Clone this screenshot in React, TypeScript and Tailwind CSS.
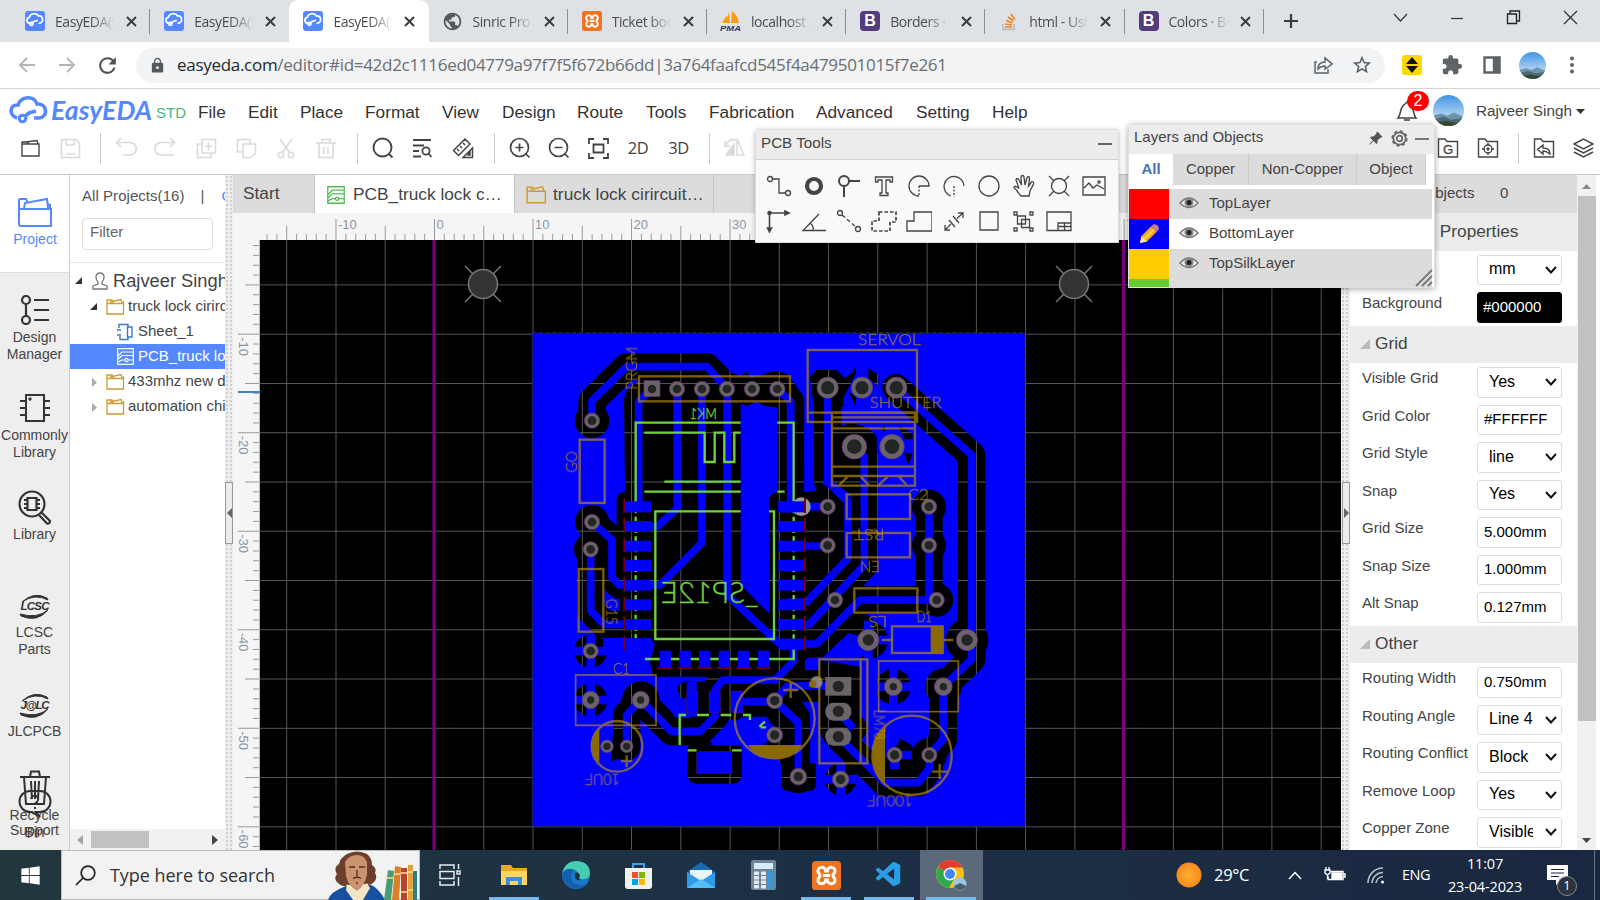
import React from "react";
import { MdPublic, MdExtension, MdLock, MdRefresh, MdStarBorder } from "react-icons/md";
import { FaWindows } from "react-icons/fa";
import { VscVscode } from "react-icons/vsc";
import { BsPinAngleFill } from "react-icons/bs";

type P = { children?: React.ReactNode };

function Svg({ w = 24, h = w, vb, sw = 1.5, c = "#444", cls = "", children }: P & { w?: number; h?: number; vb?: string; sw?: number; c?: string; cls?: string }) {
  return (
    <svg width={w} height={h} viewBox={vb ?? `0 0 ${w} ${h}`} fill="none" stroke={c} strokeWidth={sw} className={"shrink-0 " + cls}>
      {children}
    </svg>
  );
}

const CAR = "M7 17 C2 17 1 10 6 9 C7 3 16 2 19 7 C25 6 27 15 21 17 L19 17 M9 18 L12 15 L18 13";
function EasyFav() {
  return (
    <Svg w={20} vb="0 0 28 28" sw={2.4} c="#fff" cls="rounded-[3px] bg-[#5588ff]">
      <path d={CAR} />
      <circle cx="9" cy="18" r="2.2" />
    </Svg>
  );
}
function Avatar({ s }: { s: number }) {
  return (
    <svg width={s} height={s} viewBox="0 0 30 30" className="shrink-0 rounded-full">
      <defs>
        <linearGradient id="sky" x1="0" y1="0" x2="0" y2="1">
          <stop offset="0" stopColor="#3f93e6" />
          <stop offset=".6" stopColor="#a5cdef" />
        </linearGradient>
      </defs>
      <rect width="30" height="30" fill="url(#sky)" />
      <path d="M0 20 L8 18 L14 20 L20 17 L30 21 V30 H0Z" fill="#6f93ac" />
      <path d="M0 24 L10 21 L18 24 L30 22 V30 H0Z" fill="#4d6a74" />
      <path d="M0 27 L12 25 L22 27 L30 25 V30 H0Z" fill="#33492f" />
    </svg>
  );
}
function Pma() {
  return (
    <svg width="22" height="20" viewBox="0 0 22 20">
      <path d="M9 1 L10 12 L3 12 Q8 8 9 1Z M12 0 Q18 5 19 12 L11 12Z M7 4 L7 12 L2 12Z" fill="#f89c0e" />
      <text x="0" y="19.5" fontFamily="Liberation Sans" fontSize="8" fontWeight="bold" fontStyle="italic" fill="#333a6b" textLength="21" lengthAdjust="spacingAndGlyphs">PMA</text>
    </svg>
  );
}
function XBox({ s }: { s: number }) {
  return (
    <svg width={s} height={s} viewBox="0 0 32 32">
      <rect width="32" height="32" rx="4" fill="#f0731f" />
      <path d="M10 7 a4 4 0 0 1 5 4 h2 a4 4 0 0 1 5 -4 a4 4 0 0 1 2 7 a3 3 0 0 0 0 4 a4 4 0 0 1 -2 7 a4 4 0 0 1 -5 -4 h-2 a4 4 0 0 1 -5 4 a4 4 0 0 1 -2 -7 a3 3 0 0 0 0 -4 a4 4 0 0 1 2 -7Z M12 16 h8" fill="none" stroke="#fff" strokeWidth="3.2" />
    </svg>
  );
}
const Boot = () => (
  <span className="flex size-[20px] items-center justify-center rounded-[4px] bg-[#533b7c] font-['Liberation_Sans',sans-serif] text-[16px] font-bold text-white">B</span>
);
const So = () => (
  <svg width="18" height="20" viewBox="0 0 18 20" fill="none">
    <path d="M3 13 V18.5 H14 V13" stroke="#bcbbbb" strokeWidth="1.6" />
    <path d="M5 16 H12 M5 13 L12 14 M6 9.5 L12.5 12 M8 6 L13.5 10 M11 3 L15 8.5" stroke="#f48024" strokeWidth="1.6" />
  </svg>
);

function Tab({ icon, text, active, noSep }: { icon: React.ReactNode; text: string; active?: boolean; noSep?: boolean }) {
  return (
    <div className={"relative flex h-[42px] w-[139.2px] shrink-0 items-center pl-[13px] " + (active ? "rounded-t-[9px] bg-white" : "")}>
      <span className="flex w-[22px] justify-center">{icon}</span>
      <span className={"ml-[9px] w-[60px] overflow-hidden whitespace-nowrap bg-clip-text font-['Open_Sans',sans-serif] text-[14px] tracking-[-0.45px] text-transparent bg-linear-to-r from-[#45494d] from-60% to-100% " + (active ? "to-white" : "to-[#dee1e6]")}>{text}</span>
      <Svg w={11} sw={2} c="#3a3d40" cls="ml-[11px]">
        <path d="M1 1 L10 10 M10 1 L1 10" />
      </Svg>
      {!noSep && !active && <span className="ml-auto h-[25px] w-px bg-[#8b8e92]" />}
    </div>
  );
}

function Chrome() {
  return (
    <>
      <div className="flex h-[42px] bg-[#dee1e6] pl-[11px]">
        <Tab icon={<EasyFav />} text="EasyEDA(St" />
        <Tab icon={<EasyFav />} text="EasyEDA(St" noSep />
        <Tab icon={<EasyFav />} text="EasyEDA(St" active />
        <Tab icon={<MdPublic size={21} color="#55585c" />} text="Sinric Pro" />
        <Tab icon={<XBox s={20} />} text="Ticket boo" />
        <Tab icon={<Pma />} text="localhost /" />
        <Tab icon={<Boot />} text="Borders · B" />
        <Tab icon={<So />} text="html - Usi" />
        <Tab icon={<Boot />} text="Colors · Bo" />
        <div className="flex flex-1 items-center">
          <Svg w={16} sw={2.2} c="#3a3d40" cls="ml-[19px]"><path d="M8 1 V15 M1 8 H15" /></Svg>
          <div className="ml-auto flex items-center gap-[42px] pb-[7px] pr-[22px]">
            <Svg w={15} sw={1.2} c="#333"><path d="M1 4 L7.500 11 L14 4" /></Svg>
            <Svg w={14} sw={1.2} c="#333"><path d="M1 7.500 H13" /></Svg>
            <Svg w={15} sw={1.3} c="#222"><path d="M1.500 4 H10.500 V13.500 H1.500Z M4 4 V1 H13.500 V11 H10.500" /></Svg>
            <Svg w={15} sw={1.3} c="#333"><path d="M1 1 L14 14 M14 1 L1 14" /></Svg>
          </div>
        </div>
      </div>
      <div className="flex h-[47px] items-center border-b border-[#d0d3d7] bg-white pl-[18px]">
        <Svg w={18} sw={1.8} c="#b4b6b9"><path d="M17 9 H2 M9 2 L2 9 L9 16" /></Svg>
        <Svg w={18} sw={1.8} c="#b4b6b9" cls="ml-[22px]"><path d="M1 9 H16 M9 2 L16 9 L9 16" /></Svg>
        <MdRefresh size={25} color="#4e5256" className="ml-[19px] shrink-0" />
        <div className="ml-[16px] flex h-[35px] w-[1249px] shrink-0 items-center rounded-full bg-[#f1f3f4] pl-[13px] font-['Open_Sans',sans-serif] text-[17px] text-[#6a6e72]">
          <MdLock size={17} color="#55595d" className="shrink-0" />
          <span className="ml-[11px] whitespace-nowrap tracking-[-0.295px]"><span className="text-[#26282b]">easyeda.com</span>/editor#id=42d2c1116ed04779a97f7f5f672b66dd|3a764faafcd545f4a479501015f7e261</span>
          <Svg w={20} sw={1.5} c="#5f6368" cls="ml-auto"><path d="M4 7 H2 V18 H15 V14 M5 14 C5 9 8 7 12 7 V3 L19 9 L12 14 V11 C9 11 7 12 5 14Z" /></Svg>
          <MdStarBorder size={22} color="#55595d" className="ml-[18px] mr-[12px]" />
        </div>
        <Svg w={20} sw={0} cls="ml-[17px] rounded-[3px] bg-[#fbd900]"><path d="M10 2 L16 9 H4Z M10 18 L16 11 H4Z" fill="#111" /></Svg>
        <MdExtension size={22} color="#5f6368" className="ml-[19px]" />
        <Svg w={18} sw={2.4} c="#5f6368" cls="ml-[20px]"><path d="M1.500 1.500 H16.500 V16.500 H1.500Z" /><path d="M11 2 H16 V16 H11Z" fill="#5f6368" /></Svg>
        <span className="ml-[18px]"><Avatar s={27} /></span>
        <Svg w={4} h={18} sw={0} cls="ml-[24px]"><g fill="#5f6368"><circle cx="2" cy="2.500" r="2" /><circle cx="2" cy="9" r="2" /><circle cx="2" cy="15.500" r="2" /></g></Svg>
      </div>
    </>
  );
}

const Cell = ({ w, children }: P & { w: string }) => <div className={"flex h-[32px] shrink-0 items-center justify-center " + w}>{children}</div>;
const Sep = () => <div className="h-[31px] w-px shrink-0 bg-[#c9c9c9]" />;
const Lite = "#dadada";
const FolderSh = ({ children }: P) => (
  <Svg w={22} sw={1.4}><path d="M1.500 2 H8 L10 4.500 H20.500 V20 H1.500Z" />{children}</Svg>
);

function Header() {
  const menu: [string, string][] = [["File", "w-[50px]"], ["Edit", "w-[52px]"], ["Place", "w-[65px]"], ["Format", "w-[77px]"], ["View", "w-[60px]"], ["Design", "w-[75px]"], ["Route", "w-[69px]"], ["Tools", "w-[63px]"], ["Fabrication", "w-[107px]"], ["Advanced", "w-[100px]"], ["Setting", "w-[76px]"], ["Help", "w-[60px]"]];
  return (
    <div className="h-[86px] shrink-0 border-b border-[#c8c8c8] bg-white">
      <div className="flex h-[42px] items-center">
        <svg width="144" height="34" viewBox="0 0 144 34" className="ml-[9px] mt-[2px] shrink-0">
          <g fill="none" stroke="#5588ff" strokeWidth="3.600">
            <path d="M8 24 C-1 21 1 10 9 11 C12 2 25 1 28 10 C38 9 40 23 30 24 H25 M15 23 L20 19 L27 17" />
            <circle cx="13.500" cy="24.500" r="3.300" strokeWidth="3" />
          </g>
          <text x="42" y="26" fontFamily="Lato" fontWeight="700" fontStyle="italic" fontSize="27" fill="#5588ff" textLength="101" lengthAdjust="spacingAndGlyphs">EasyEDA</text>
        </svg>
        <span className="ml-[3px] w-[42px] pt-[7px] text-[15px] text-[#45b97c]">STD</span>
        {menu.map(([m, w]) => (
          <span key={m} className={"shrink-0 pt-[5px] text-[17.250px] text-[#333] " + w}>{m}</span>
        ))}
        <div className="ml-auto flex items-center gap-[11px] pr-[15px] pt-[1px]">
          <div className="relative">
            <Svg w={22} h={24} sw={1.5}><path d="M2 19 C5 16 4 8 8 6 L11 3 L14 6 C18 8 17 16 20 19Z M8 21 H14" /></Svg>
            <span className="absolute -right-[11px] -top-[8px] flex h-[20px] w-[22px] items-center justify-center rounded-full bg-[#f00] text-[16px] text-white">2</span>
          </div>
          <div className="flex items-center gap-[12px]">
            <span className="ml-[4px]"><Avatar s={31} /></span>
            <span className="whitespace-nowrap pt-[2px] text-[15.300px] text-[#444]">Rajveer Singh</span>
            <Svg w={9} h={6} sw={0} cls="-ml-[8px] mt-[2px]"><path d="M0 0 H9 L4.500 5Z" fill="#333" /></Svg>
          </div>
        </div>
      </div>
      <div className="flex h-[34px] items-center pl-[10px]">
        <Cell w="w-[40px]"><Svg w={19} sw={1.4}><path d="M1 5 H18 V17 H1Z M1 5 V3 H6 L8 5 M4 3 L16 1.500 L17 5" /></Svg></Cell>
        <Cell w="w-[40px]"><Svg w={21} sw={1.6} c={Lite}><path d="M1.500 1.500 H16 L19.500 5 V19.500 H1.500Z M6 1.500 V7 H14 V1.500 M6 16 H15" /></Svg></Cell>
        <div className="ml-[10px]"><Sep /></div>
        <Cell w="w-[50px]"><Svg w={22} sw={1.6} c={Lite}><path d="M6 1 L1.500 5.500 L6 10 M1.500 5.500 H15 A6 6 0 0 1 15 18 H8" /></Svg></Cell>
        <Cell w="w-[28px]"><Svg w={22} sw={1.6} c={Lite}><path d="M16 1 L20.500 5.500 L16 10 M20.500 5.500 H7 A6 6 0 0 0 7 18 H20" /></Svg></Cell>
        <Cell w="w-[54px]"><Svg w={21} sw={1.6} c={Lite}><path d="M6 1.500 H19.500 V15 H6Z M6 6 H1.500 V19.500 H15 V15 M12.500 4.500 V12 M9 8.300 H16.500" /></Svg></Cell>
        <Cell w="w-[26px]"><Svg w={21} sw={1.6} c={Lite}><path d="M14 6 V1.500 H1.500 V14 H7 M7 6 H19.500 V15 L15 19.500 H7Z" /></Svg></Cell>
        <Cell w="w-[54px]"><Svg w={18} h={21} sw={1.6} c={Lite}><path d="M3 1 L13 15 M15 1 L5 15" /><circle cx="4" cy="17" r="2.700" /><circle cx="14" cy="17" r="2.700" /></Svg></Cell>
        <Cell w="w-[26px]"><Svg w={20} h={21} sw={1.6} c={Lite}><path d="M0 5 H20 M6 5 V1.500 H14 V5 M3 5 V19.500 H17 V5 M8 9 V16 M12 9 V16" /></Svg></Cell>
        <div className="ml-[18px]"><Sep /></div>
        <Cell w="w-[49px]"><Svg w={22} sw={1.9}><circle cx="10.500" cy="10.500" r="9" /><path d="M17 17 L20.500 20.500" /></Svg></Cell>
        <Cell w="w-[30px]"><Svg w={20} h={20} sw={1.8}><path d="M1 2 H19 M1 7.500 H12 M1 13 H7 M1 18.500 H9" /><circle cx="14" cy="13" r="3.600" /><path d="M16.500 15.500 L19.500 19" /></Svg></Cell>
        <Cell w="w-[52px]"><Svg w={23} sw={1.5}><path d="M1.500 13.500 L13 2 L18 7 L6.500 18.500Z M5 12 L7 14 M8 9 L10 11 M11 6 L13 8 M11 20.500 L20.500 11 V20.500Z M16 18 L18 15.500 V18Z" /></Svg></Cell>
        <div className="ml-[5px]"><Sep /></div>
        <Cell w="w-[49px]"><Svg w={22} sw={1.7}><circle cx="10.500" cy="10.500" r="9" /><path d="M17 17 L20.500 20.500 M10.500 6.500 V14.500 M6.500 10.500 H14.500" /></Svg></Cell>
        <Cell w="w-[29px]"><Svg w={22} sw={1.7}><circle cx="10.500" cy="10.500" r="9" /><path d="M17 17 L20.500 20.500 M6.500 10.500 H14.500" /></Svg></Cell>
        <Cell w="w-[50px]"><Svg w={21} sw={1.8}><path d="M1 6 V1 H6 M15 1 H20 V6 M20 15 V20 H15 M6 20 H1 V15" /><path d="M5.500 6.500 H15.500 V14.500 H5.500Z" /></Svg></Cell>
        <Cell w="w-[30px]"><span className="font-['Open_Sans',sans-serif] text-[16.500px] tracking-[-0.500px] text-[#444]">2D</span></Cell>
        <Cell w="w-[51px]"><span className="font-['Open_Sans',sans-serif] text-[16.500px] tracking-[-0.500px] text-[#444]">3D</span></Cell>
        <div className="ml-[5px]"><Sep /></div>
        <Cell w="w-[50px]"><Svg w={22} sw={1.5} c={Lite}><path d="M10 18 H2 L10 7Z" fill={Lite} /><path d="M13 2 V18 H20Z M2 8 C4 3 8 2 12 3 M1 4 V9 H6" /></Svg></Cell>
        <div className="ml-auto flex items-center pr-[6px]">
          <FolderSh><text x="11" y="17" textAnchor="middle" fontFamily="Liberation Sans" fontSize="13" fill="#444" stroke="#444" strokeWidth=".3">G</text></FolderSh>
          <div className="ml-[18px]"><FolderSh><circle cx="11" cy="12" r="4" /><circle cx="11" cy="12" r="1" /><path d="M11 6 V9 M11 15 V18 M5 12 H8 M14 12 H17" /></FolderSh></div>
          <div className="ml-[19px]"><Sep /></div>
          <div className="ml-[14px]"><FolderSh><path d="M10 8 L4.500 12.500 L10 17 V14 C14 14 15 16 17 17 C17 12 14 11 10 11Z" /></FolderSh></div>
          <Svg w={21} sw={1.5} cls="ml-[18px]"><path d="M1 6 L10.500 1 L20 6 L10.500 11Z M1 10 L10.500 15 L20 10 M1 14 L10.500 19 L20 14" /></Svg>
        </div>
      </div>
    </div>
  );
}

function RailItem({ icon, lines, cls = "" }: { icon: React.ReactNode; lines: string[]; cls?: string }) {
  return (
    <div className={"flex h-[98px] w-[69px] shrink-0 flex-col items-center " + cls}>
      <div className="flex h-[36px] items-center">{icon}</div>
      <div className="mt-[1px] text-center text-[14px] leading-[17px]">{lines.map((l) => <div key={l}>{l}</div>)}</div>
    </div>
  );
}
function Oval({ t }: { t: string }) {
  return (
    <svg width="36" height="26" viewBox="0 0 36 26" className="translate-y-[2px]">
      <path d="M5 8 Q17 -3 30 4 L31 6 Q18 -1 5 8Z M31 16 Q20 29 4 22 L3 20 Q20 25 31 16Z" fill="#333" stroke="#333" />
      <text x="18" y="16" textAnchor="middle" fontFamily="Liberation Sans" fontWeight="bold" fontStyle="italic" fontSize="11.5" fill="#333" textLength="29">{t}</text>
    </svg>
  );
}
function Rail() {
  const c = "#333";
  return (
    <div className="relative flex w-[70px] shrink-0 flex-col overflow-hidden border-r border-[#ccc] bg-[#eee] text-[#444]">
      <RailItem cls="bg-white pt-[19px] text-[#5588ff] !w-[70px] border-b border-[#ddd]" lines={["Project"]} icon={<Svg w={36} h={32} sw={2} c="#5588ff"><path d="M2 13 H34 V30 H4 Q2 30 2 28Z M2 13 V4 Q2 3 3 3 H9 L11 7 M7 12 L8 7 L30 3 L31 12 M31 8 L33 9 V13" /></Svg>} />
      <RailItem cls="pt-[19px]" lines={["Design", "Manager"]} icon={<Svg w={30} h={30} sw={2.200} c={c}><circle cx="6" cy="5" r="4" /><circle cx="6" cy="25" r="4" /><path d="M6 9 V21 M14 5 H29 M14 15 H29 M14 25 H29" /></Svg>} />
      <RailItem cls="pt-[19px]" lines={["Commonly", "Library"]} icon={<Svg w={32} h={30} sw={2} c={c}><path d="M7 2 H25 V28 H7Z M1 8 H7 M1 15 H7 M1 22 H7 M25 8 H31 M25 15 H31 M25 22 H31" /><circle cx="11" cy="6" r=".7" /></Svg>} />
      <RailItem cls="pt-[20px]" lines={["Library"]} icon={<Svg w={34} h={35} sw={2.200} c={c}><circle cx="14" cy="14" r="12.500" /><path d="M9.500 8 H18.500 V20 H9.500Z M6 10 H9 M6 14 H9 M6 18 H9 M19 10 H22 M19 14 H22 M19 18 H22" /><path d="M23 22 L32 31 Q32 34 29 33.500 L21 25" /></Svg>} />
      <RailItem cls="pt-[20px]" lines={["LCSC", "Parts"]} icon={<Oval t="LCSC" />} />
      <RailItem cls="pt-[21px]" lines={["JLCPCB"]} icon={<Oval t="J@LC" />} />
      <RailItem cls="pt-[7px]" lines={["Recycle", "Bin"]} icon={<Svg w={32} h={36} sw={2} c={c}><path d="M1 7 H31 M11 7 L12 1.500 H20 L21 7 M5 7 L7 34 H25 L27 7 M12 11 L13 29 M16 11 V29 M20 11 L19 29" /></Svg>} />
      <div className="absolute left-0 top-[615px] w-[69px] text-center text-[14px] leading-[17px]">
        <Svg w={34} h={30} sw={2} c={c} cls="mx-auto"><path d="M12 1 H22 A10 10 0 0 1 22 22 L18 22 L22 27 L14 22 H12 A10 10 0 0 1 12 1Z M13 9 Q14 5 18 6 Q22 8 19 12 Q17 13 17 15 M17 17 V19" /></Svg>
        <div className="mt-[2px]">Support</div>
      </div>
    </div>
  );
}

const Fold = ({ c = "#cd9b33" }: { c?: string }) => (
  <Svg w={19} h={17} sw={1.3} c={c}><path d="M1 5.500 H17.500 V16 H1Z M1 5.500 V2 H6 L7.500 5 M4 4 L15 1.500 L16 5 M17.500 5 V3" /></Svg>
);
const PcbI = ({ c, s = 17 }: { c: string; s?: number }) => (
  <Svg w={s} vb="0 0 17 17" sw={1.2} c={c}><path d="M.7 .7 H16.300 V16.300 H.7Z M1 8 L5 4 H16 M1 11 L5 7.500 H16 M1 14 L5 12 H8 M11 12 H16" /><circle cx="9.500" cy="12" r="1.600" /></Svg>
);
const TriO = ({ c = "#333", s = 7 }: { c?: string; s?: number }) => <Svg w={s} sw={0}><path d={`M${s} 0 V${s} H0Z`} fill={c} /></Svg>;
const TriC = () => <Svg w={5} h={9} sw={0} cls="mt-[2px]"><path d="M0 0 L5 4.500 L0 9Z" fill="#aaa" /></Svg>;

function Tree() {
  const row = "flex h-[25px] shrink-0 items-center whitespace-nowrap";
  return (
    <div className="flex w-[155px] shrink-0 flex-col overflow-hidden bg-white text-[15px] text-[#444]">
      <div className="flex h-[41px] shrink-0 items-center whitespace-nowrap pl-[12px] pt-px tracking-[0.05px] text-[#555]">All Projects(16)<span className="ml-[16px]">|</span><span className="ml-[17px] text-[#5588ff]">Open</span></div>
      <div className="mx-[12px] mt-[2px] flex h-[32px] w-[131px] shrink-0 items-center rounded-[4px] border border-[#ddd] pb-[3px] pl-[7px] text-[#666]">Filter</div>
      <div className="mt-[12px] h-px shrink-0 bg-[#e8e8e8]" />
      <div className="mt-[5px] flex h-[26px] shrink-0 items-center whitespace-nowrap pl-[5px] pb-px text-[18.300px]"><TriO /><Svg w={16} h={18} sw={1.3} c="#777" cls="ml-[10px] mr-[5px]"><path d="M8 1 Q12 1 12 5 Q12 8 10 10 V12 L15 14 V17 H1 V14 L6 12 V10 Q4 8 4 5 Q4 1 8 1Z" /></Svg>Rajveer Singh</div>
      <div className={row + " pl-[20px]"}><TriO /><span className="ml-[9px] mr-[3px]"><Fold /></span><span className="pb-px">truck lock cirircuit</span></div>
      <div className={row + " pl-[47px]"}><Svg w={17} h={18} sw={1.4} c="#3d79c4"><path d="M2 5 V1.500 H11 V4 M11 14 V16.500 H3 V13 M0 7 H4 M0 12 H4 M10.500 4 H15 V14 H10.500Z" /></Svg><span className="ml-[4px]">Sheet_1</span></div>
      <div className={row + " bg-[#5588ff] pl-[47px] text-white"}><PcbI c="#fff" /><span className="ml-[4px]">PCB_truck lock</span></div>
      <div className={row + " pl-[22px]"}><TriC /><span className="ml-[9px] mr-[3px]"><Fold /></span>433mhz new door</div>
      <div className={row + " pl-[22px]"}><TriC /><span className="ml-[9px] mr-[3px]"><Fold /></span>automation chip</div>
      <div className="mt-auto flex h-[21px] items-center bg-[#f1f1f1] pl-[7px] pr-[7px]">
        <Svg w={6} h={10} sw={0}><path d="M6 0 L0 5 L6 10Z" fill="#a3a3a3" /></Svg>
        <div className="ml-[8px] h-[17px] w-[58px] bg-[#c1c1c1]" />
        <Svg w={6} h={10} sw={0} cls="ml-auto"><path d="M0 0 L6 5 L0 10Z" fill="#444" /></Svg>
      </div>
    </div>
  );
}

function Splitter({ right }: { right?: boolean }) {
  return (
    <div className={"flex shrink-0 flex-col bg-[#eee] bg-[radial-gradient(#cfcfcf_0.9px,transparent_1.1px)] bg-[size:4px_4px] pt-[307px] " + (right ? "w-[9px] pl-px" : "w-[8px]")}>
      <div className="flex h-[62px] w-full items-center justify-center border border-[#999] bg-[#eeebeb]">
        <Svg w={5} h={10} sw={0}><path d={right ? "M0 0 L5 5 L0 10Z" : "M5 0 L0 5 L5 10Z"} fill="#666" /></Svg>
      </div>
    </div>
  );
}

const G = 49.26;
function RulerH() {
  const t: React.ReactNode[] = [];
  for (let k = -18; k < 96; k++) {
    const x = 434.5 - 233 + (k * G) / 5;
    if (x < 30) continue;
    const h = k % 10 === 0 ? 22 : k % 5 === 0 ? 15 : 7;
    t.push(<path key={k} d={`M${x} ${28 - h} V28`} stroke="#999" />);
    if (k % 10 === 0) t.push(<text key={"t" + k} x={x + 2} y="16" fontSize="13" fill="#8b95a1">{k}</text>);
  }
  return <svg width="1108" height="28" className="block bg-[#f5f5f5] font-['Liberation_Sans',sans-serif]">{t}<path d="M27 27.500 H1108" stroke="#bbb" /></svg>;
}
function RulerV() {
  const t: React.ReactNode[] = [];
  for (let k = -9; k < 53; k++) {
    const y = 334.2 - 240 + (k * G) / 5;
    const w = k % 10 === 0 ? 22 : k % 5 === 0 ? 15 : 7;
    t.push(<path key={k} d={`M${27 - w} ${y} H27`} stroke="#999" />);
    if (k % 10 === 0) t.push(<text key={"t" + k} transform={`translate(6 ${y + 3}) rotate(90)`} fontSize="13" fill="#8b95a1">{-10 - k}</text>);
  }
  return <svg width="27" height="610" className="block shrink-0 bg-[#f5f5f5] font-['Liberation_Sans',sans-serif]">{t}<path d="M26.500 0 V610" stroke="#bbb" /><path d="M5 152 H27" stroke="#3d85c6" strokeWidth="2" /></svg>;
}

/* Board geometry: units are thirds of a pixel, origin at the upper left of the outline. */
const TRACES = [
  "M216 300 V242 L320 140 H560 L622 205",
  "M395 206 L356 245 V560",
  "M471 207 V565 L412 619 H355",
  "M546 207 V668 L420 795 H355",
  "M621 207 V825 L775 968 H815",
  "M772 207 L812 245 V560",
  "M216 606 L276 660 V772 L298 795 H355",
  "M212 688 V872 L252 913 H355",
  "M923 203 V485 L984 545 V715 L860 846 H800",
  "M1003 380 L1033 410 V735 L868 913 H815",
  "M1250 840 H1020 L890 972 H815",
  "M815 560 H923", "M815 678 H923",
  "M1128 203 L1355 405 V950 L1341 960 L1355 990 V1018 L1270 1100 V1258 L1228 1305 V1345 L1195 1388 H1095 L955 1250",
  "M1227 560 V840",
  "M362 1140 L320 1185 V1280",
  "M362 1140 L455 1235 H540 L585 1190 V1110 L608 1080 H765 L820 1025 V980",
  "M652 1145 H764", "M764 1142 L835 1208 V1370",
  "M764 1142 L800 1100 L870 1097 H955",
  "M955 1175 L1000 1225",
];
const BOT = [560, 619, 678, 736, 795, 854, 913, 972];
function Pad({ x, y, r = 23, h = 13 }: { x: number; y: number; r?: number; h?: number }) {
  return <g><circle cx={x} cy={y} r={r} fill="#6a6468" stroke="#6b2a78" strokeWidth="2" /><circle cx={x} cy={y} r={h} fill="#222524" /></g>;
}
function T({ x, y, s, r = 0, m, w, children }: P & { x: number; y: number; s: number; r?: number; m?: boolean; w?: number }) {
  return <text transform={`translate(${x} ${y}) rotate(${r}) ${m ? "scale(-1 1)" : ""}`} fontSize={s} textLength={w} lengthAdjust="spacingAndGlyphs">{children}</text>;
}
/* Thermal relief: a ring of clearance with four copper spokes left in it. */
function Thermal({ x, y, r = 50 }: { x: number; y: number; r?: number }) {
  return <g><circle cx={x} cy={y} r={r} fill="#000" stroke="none" /><path d={`M${x - r} ${y} H${x + r} M${x} ${y - r} V${y + r}`} stroke="#fff" strokeWidth="26" /></g>;
}
function Board() {
  const lines: string[] = [];
  for (let i = -3; i < 19; i++) lines.push(`M${(434.5 + i * G).toFixed(1)} 240 V850`);
  for (let i = -1; i < 11; i++) lines.push(`M260 ${(334.2 + i * G).toFixed(1)} H1341`);
  return (
    <svg width="1081" height="610" viewBox="260 240 1081 610" className="block bg-black font-['Liberation_Sans',sans-serif]">
      <path d={lines.join(" ")} stroke="#555" strokeWidth="1" />
      <path d="M434 240 V850 M1123.500 240 V850" stroke="#7f007f" strokeWidth="3" />
      {[483, 1074].map((x) => (
        <g key={x} stroke="#777" strokeWidth="1.500"><path d={`M${x - 18} 266 L${x + 18} 302 M${x + 18} 266 L${x - 18} 302`} /><circle cx={x} cy="284" r="14.500" fill="#333" /></g>
      ))}
      <g transform="translate(520 320) scale(.33333)">
        <mask id="pour" maskUnits="userSpaceOnUse" x="0" y="0" width="1600" height="1600">
          <rect x="37" y="38" width="1478" height="1482" fill="#fff" />
          <g fill="none" stroke="#000" strokeWidth="82" strokeLinejoin="round" strokeLinecap="round">
            {TRACES.map((d) => <path key={d} d={d} />)}
          </g>
          <g fill="#000">
            <path d="M312 245 Q312 205 350 190 L640 160 L660 168 L682 155 L690 175 L740 160 Q772 145 805 165 L850 230 L853 515 L900 512 L970 560 V700 L900 770 L880 1000 L770 1070 H400 L390 1030 L405 970 L300 950 V800 L290 620 V540 Q292 515 315 515Z" />
            <circle cx="216" cy="302" r="52" /><circle cx="216" cy="606" r="51" /><circle cx="212" cy="688" r="50" />
            <path d="M870 170 L890 150 H950 L975 175 L1000 155 L1005 140 L1008 160 L990 195 L970 235 V260 L880 250Z" />
            <path d="M985 215 L1008 230 V260Z M1045 145 L1075 165 V200 L1045 175Z" />
            <path d="M935 350 Q960 305 1005 312 Q1050 320 1070 350 V400 L1055 700 L1020 800 L900 800 L870 700 L870 520 L900 505 L940 520Z" />
            <path d="M1080 325 L1095 318 V335Z M1135 318 L1178 340 V358 H1152Z M1152 400 H1178 L1165 435Z" />
            <circle cx="1227" cy="560" r="51" /><circle cx="1227" cy="676" r="51" /><circle cx="1250" cy="840" r="50" />
            <circle cx="1341" cy="960" r="64" /><circle cx="1270" cy="1100" r="55" /><circle cx="1228" cy="1305" r="52" />
            <path d="M1095 1315 Q1130 1285 1140 1256 L1175 1275 L1180 1290 L1200 1265 L1240 1280 V1400 H1095Z" />
            <circle cx="362" cy="1140" r="56" /><path d="M278 1250 H310 V1320 L290 1318 L275 1325Z" />
            <circle cx="835" cy="1370" r="50" /><rect x="785" y="1290" width="102" height="124" rx="20" />
            <rect x="503" y="1265" width="162" height="126" rx="25" />
            <path d="M470 1100 Q490 1080 520 1085 H700 V1200 H540 L500 1190Z" />
            <path d="M640 1100 L760 1070 L900 1020 L1020 1040 V1270 L960 1300 L880 1240 L870 1330 H780 L755 1275 L640 1270Z" />
            <path d="M870 880 H1040 L1060 900 L960 1010 L880 1010Z" />
          </g>
          <Thermal x={212} y={993} /><Thermal x={212} y={1140} /><Thermal x={1120} y={1100} r={53} />
          <Thermal x={962} y={1378} r={48} /><Thermal x={1045} y={960} r={58} />
        </mask>
        <rect x="37" y="38" width="1478" height="1482" fill="#00f" mask="url(#pour)" />
        <rect x="37" y="38" width="1478" height="1482" fill="none" stroke="#2a2a2a" strokeWidth="3" strokeDasharray="12 8" />
        <g fill="#00f">
          <path d="M662 250 L680 258 L710 245 L735 258 L772 262 V515 Q747 520 747 545 V880 L662 795Z" />
          <path d="M853 250 H882 V510 L853 515Z M905 490 L935 480 L1000 530 H970Z" />
          <path d="M250 955 H395 L400 970 L385 1000 V1070 H335 V1015 H300 L250 990Z" />
          <path d="M575 1265 L632 1210 L670 1190 H740 L755 1215 H765 L745 1240 V1265 L720 1275 H575Z" />
          <path d="M855 1050 V1018 L900 1010 V1050Z M905 1015 L985 940 L1030 950 V1010 H960Z" />
          <path d="M470 1135 H500 V1085 H530 V1190 H460Z" />
          <path d="M885 1080 H895 L900 1240 L950 1330 L870 1330 V1180 L845 1145 H900Z" />
          <path d="M249 1210 H274 V1279 H249Z M1124 1292 H1176 V1318 H1138 V1347 H1110 V1305Z" />
        </g>
        <g fill="none" stroke="#00f" strokeWidth="23" strokeLinejoin="round">{TRACES.map((d) => <path key={d} d={d} />)}</g>
        <g fill="none" stroke="#6fd23c" strokeWidth="7">
          <path d="M662 308 H347 V955 M772 308 H821 V1017 H375" />
          <path d="M373 338 H554 V426 H584 V338 H613 V426 H643 V338 H662 M433 485 H662 M373 515 H662 M772 515 H794 M662 574 H406 V957 H762 V574 H747" />
          <path d="M479 1275 V1185 H498 M531 1185 H567 M602 1185 H634 M669 1185 H690 V1200 M503 1291 H530 M636 1291 H665 M718 1220 L735 1205 M722 1222 H738" />
        </g>
        <g fill="#000">
          {[545, 604, 662, 721, 780, 839, 898].map((y) => <path key={y} d={`M335 ${y + 35} h22 v10 h-22Z M810 ${y + 35} h22 v10 h-22Z`} />)}
        </g>
        <g fill="#00f">
          {BOT.map((y) => <g key={y}><rect x="315" y={y - 16} width="78" height="33" /><rect x="775" y={y - 16} width="80" height="33" /></g>)}
          {[436, 495, 554, 613, 671, 731].map((x) => <rect key={x} x={x - 17} y="992" width="34" height="50" />)}
          <g stroke="#3a1060" strokeWidth="2"><rect x="500" y="1113" width="34" height="66" /><rect x="567" y="1113" width="34" height="66" /><rect x="635" y="1113" width="34" height="66" /><rect x="530" y="1295" width="106" height="66" /></g>
        </g>
        <circle cx="844" cy="560" r="28" fill="#999" /><rect x="775" y="544" width="80" height="33" fill="#00f" />
        <path d="M313 535 V995 M855 535 V995" stroke="#700014" strokeWidth="6" strokeDasharray="44 15" />
        <path d="M414 1045 H752" stroke="#700014" strokeWidth="6" strokeDasharray="44 15" />
        <rect x="372" y="182" width="48" height="48" fill="#6a6468" stroke="#6b2a78" strokeWidth="2" /><circle cx="396" cy="207" r="13" fill="#222524" />
        {[471, 546, 621, 696, 772].map((x) => <Pad key={x} x={x} y={207} />)}
        <Pad x={216} y={302} /><Pad x={216} y={606} /><Pad x={212} y={688} /><Pad x={212} y={993} />
        <Pad x={212} y={1140} r={26} h={11} /><Pad x={362} y={1140} r={26} h={11} />
        <Pad x={261} y={1279} r={19} h={11} /><Pad x={320} y={1279} r={19} h={11} />
        {[923, 1026, 1129].map((x) => <Pad key={x} x={x} y={203} r={32} h={20} />)}
        <Pad x={1003} y={380} r={37} h={22} /><Pad x={1116} y={380} r={37} h={22} />
        <Pad x={923} y={560} /><Pad x={923} y={676} /><Pad x={1227} y={560} /><Pad x={1227} y={676} /><Pad x={945} y={840} /><Pad x={1250} y={840} />
        <Pad x={1045} y={960} r={32} h={17} /><Pad x={1341} y={960} r={32} h={17} />
        <Pad x={1120} y={1100} r={27} h={11} /><Pad x={1270} y={1100} r={27} h={11} />
        <Pad x={1124} y={1305} h={14} /><Pad x={1228} y={1305} h={14} />
        <Pad x={764} y={1142} r={24} h={14} /><Pad x={764} y={1245} r={24} h={14} />
        <Pad x={835} y={1370} r={25} h={14} /><Pad x={962} y={1378} r={25} h={14} />
        <g fill="#6a6468"><rect x="916" y="1071" width="78" height="56" /><rect x="916" y="1148" width="78" height="54" rx="25" /><rect x="916" y="1223" width="78" height="54" rx="25" /></g>
        <g fill="#222524"><circle cx="955" cy="1099" r="17" /><circle cx="955" cy="1174" r="17" /><circle cx="955" cy="1250" r="17" /></g>
        <circle cx="890" cy="1086" r="18" fill="#aaa" opacity=".7" />
        <g opacity=".62" stroke="#c79a00" strokeWidth="7" fill="none">
          <rect x="357" y="169" width="453" height="75" /><rect x="179" y="359" width="75" height="190" /><rect x="176" y="747" width="74" height="188" />
          <rect x="167" y="1065" width="241" height="151" strokeWidth="5" /><circle cx="291" cy="1279" r="76" />
          <rect x="863" y="90" width="328" height="216" /><path d="M863 278 H1190" />
          <rect x="936" y="278" width="249" height="219" /><path d="M936 292 H1185 M936 325 H1185 M936 440 H1185 M936 468 H1185 M958 495 L985 468 M1020 468 L1048 497 M1075 497 L1105 468 M1135 468 L1160 495" />
          <rect x="980" y="523" width="190" height="74" /><rect x="980" y="639" width="190" height="73" /><rect x="1003" y="805" width="189" height="73" />
          <rect x="1116" y="919" width="152" height="80" /><path d="M1085 960 H1116 M1268 960 H1300" />
          <rect x="1076" y="1023" width="239" height="152" strokeWidth="5" /><circle cx="1176" cy="1306" r="119" /><circle cx="764" cy="1195" r="120" />
          <rect x="898" y="1018" width="144" height="312" /><path d="M1022 1018 V1330 M790 1110 H835 M812 1088 V1134 M1236 1355 H1282 M1259 1332 V1377 M303 1323 H337 M320 1306 V1342" />
        </g>
        <g fill="#8a6a00"><rect x="1232" y="919" width="36" height="80" /><path d="M683 1275 H846 Q820 1315 764 1315 Q710 1315 683 1275Z M1095 1218 V1392 Q1057 1365 1057 1306 Q1057 1250 1095 1218Z M238 1226 V1330 Q215 1310 215 1279 Q215 1240 238 1226Z" /><circle cx="878" cy="1092" r="11" /></g>
        <g fill="#d6a300" stroke="#d6a300" strokeWidth="1.2" opacity=".6" fontFamily="Lato" fontWeight="300">
          <T x={350} y={210} s={46} r={-90} w={130}>PRGM</T><T x={170} y={458} s={46} r={-90} w={64}>GO</T><T x={260} y={836} s={46} r={90} w={78}>G15</T>
          <T x={280} y={1061} s={46} w={50}>C1</T><T x={300} y={1363} s={48} r={180} w={105}>10UF</T>
          <T x={1015} y={76} s={48} w={187}>SERVOL</T><T x={1050} y={263} s={48} w={215}>SHUTTER</T><T x={1165} y={540} s={48} w={60}>C2</T>
          <T x={1094} y={628} s={48} r={180} w={92}>RST</T><T x={1080} y={722} s={48} r={180} w={60}>EN</T>
          <T x={1102} y={887} s={48} r={180} w={56}>LS</T><T x={1190} y={907} s={46} w={46}>D1</T>
          <T x={1064} y={1168} s={46} r={90} w={90}>LM78</T><T x={1178} y={1427} s={48} r={180} w={136}>100UF</T>
        </g>
        <g fill="#6fd23c" stroke="#6fd23c" strokeWidth="1.2" fontFamily="Lato" fontWeight="300"><T x={590} y={296} s={48} m w={80}>MK1</T><T x={715} y={850} s={86} m w={292}>_SP12E</T></g>
      </g>
    </svg>
  );
}

function EditorTabs() {
  return (
    <div className="flex h-[38px] shrink-0 items-center bg-[#dcdcdc] text-[17.300px] text-[#444]">
      <div className="flex h-full w-[82px] items-center border-r border-[#c4c4c4] pl-[10px]">Start</div>
      <div className="flex h-full w-[200px] items-center gap-[8px] whitespace-nowrap border-r border-[#c4c4c4] bg-white pl-[12px] pt-px"><PcbI c="#4fc04f" s={18} />PCB_truck lock c…</div>
      <div className="flex h-full w-[199px] items-center gap-[6px] border-r border-[#c4c4c4] pl-[11px] pt-px"><Svg w={21} h={19} vb="0 0 19 17" sw={1.3} c="#cd9b33"><path d="M1 5.500 H17.500 V16 H1Z M1 5.500 V2 H6 L7.500 5 M4 4 L15 1.500 L16 5" /></Svg><span className="whitespace-nowrap tracking-[0.050px]">truck lock cirircuit…</span></div>
    </div>
  );
}

const TOOLS: React.ReactNode[] = [
  <g><circle cx="4" cy="5" r="2.500" /><circle cx="22" cy="19" r="2.500" /><path d="M6.500 5 H13 V19 H19.500" /></g>,
  <circle cx="13" cy="12" r="7" strokeWidth="4.200" />,
  <g strokeWidth="2"><circle cx="8" cy="7" r="5" /><path d="M13 7 H24 M8 12 V23" /></g>,
  <path d="M4.500 3 H21.500 V8 H19 V6 H15 V19 H17 V21.500 H9 V19 H11 V6 H7 V8 H4.500Z" />,
  <g><path d="M13 22 A10 10 0 1 1 23 12 H13" /><path d="M13 12 V22" strokeDasharray="2 1.500" /></g>,
  <g><path d="M10 22 A10 10 0 1 1 23 12" /><path d="M13 12 V23" strokeDasharray="2 1.500" /></g>,
  <circle cx="13" cy="12" r="10" />,
  <path d="M10 22 C7 19 6 16 3 13.500 C3 11.500 5.500 12 8 14.500 L5 6 C5 4 7 4 8 6 L10.500 11 L10 3 C10.500 1 12.500 1 13 3 L14 11 L16 3.500 C17 2 18.500 2.500 18.500 4.500 L17.500 12 L20.500 8 C22 7 23 8 22.500 10 L19 17 L18 22 Z" />,
  <g><circle cx="13" cy="12" r="7.500" /><path d="M3 2 L8 7 M23 2 L18 7 M3 22 L8 17 M23 22 L18 17" /></g>,
  <g><path d="M2 3 H24 V21 H2Z M3 14 L8 9 L12 14 L16 11 L23 15" /><circle cx="18" cy="8" r="1.200" /></g>,
  <g strokeWidth="1.600"><path d="M3.500 4 H22 M3.500 4 V22" /><path d="M19 2 L23 4 L19 6Z M1.500 19 L3.500 23 L5.500 19Z" fill="#444" /><circle cx="3.500" cy="4" r="1.500" fill="#444" /></g>,
  <path d="M18 5 L2 21.500 H25 M9 14 Q13 17 12 21" />,
  <g><circle cx="4" cy="4" r="2.500" /><circle cx="22" cy="20" r="2.500" /><path d="M6 6 L20 18" strokeDasharray="4 2.500" /></g>,
  <path d="M8 3 H25 V13 H19 V22 H1 V12 H8Z" strokeDasharray="3.500 2" strokeWidth="1.700" />,
  <path d="M8 3 H26 V22 H1 V12 H8Z" />,
  <path d="M4 21 L10 15 M16 9.500 L22 4 M17 4 H22 V9 M4 16 V21 H9 M8 11 L14 18 M12 7 L18 14" />,
  <path d="M4 3 H22 V21 H4Z" />,
  <path d="M3 3 h3 v3 h-3Z M19 3 h3 v3 h-3Z M3 19 h3 v3 h-3Z M19 19 h3 v3 h-3Z M6.500 7 h8 v8 h-8Z M10.500 10.500 h8 v8 h-8Z" />,
  <path d="M1 3 H25 V21.500 H1Z M12 21 V14 H25 M12 17.500 H25 M18.500 14 V21" />,
];
function PcbTools() {
  return (
    <div className="absolute left-[755px] top-[129px] flex h-[114px] w-[364px] flex-col rounded-t-[4px] border border-[#dcdcdc] bg-[#f9f9f9] shadow-[0_1px_5px_rgba(0,0,0,0.25)]">
      <div className="flex h-[30px] items-center justify-between border-b border-[#d0d0d0] bg-[#ececec] pb-[2px] pl-[5px] pr-[6px] text-[15.200px] text-[#444]">PCB Tools<span className="h-[2px] w-[14px] bg-[#666]" /></div>
      <div className="grid grid-cols-[repeat(10,35px)] grid-rows-[35px_35px] pl-[5px] pt-[8px]">
        {TOOLS.map((t, i) => <div key={i} className="flex items-center justify-center"><Svg w={26} h={24} sw={1.3}>{t}</Svg></div>)}
      </div>
    </div>
  );
}
const Eye = () => (
  <Svg w={20} h={14} sw={1.4} c="#777"><path d="M1 7 Q10 -3 19 7 Q10 16 1 7Z" fill="#eee" /><circle cx="10" cy="6.500" r="4.500" fill="#888" stroke="none" /><circle cx="10" cy="6.500" r="2.500" fill="#222" stroke="none" /></Svg>
);
function Layers() {
  const tab = "flex h-full items-center justify-center border-r border-[#ccc] bg-[#dcdcdc]";
  return (
    <div className="absolute left-[1128px] top-[124px] flex h-[164px] w-[307px] flex-col overflow-hidden rounded-t-[4px] border border-[#e0e0e0] bg-white text-[15px] text-[#444] shadow-[0_1px_6px_rgba(0,0,0,0.35)]">
      <div className="flex h-[29px] shrink-0 items-center bg-[#ececec] pb-[2px] pl-[5px] pr-[5px]">
        <span className="pb-[3px]">Layers and Objects</span>
        <BsPinAngleFill size={15} color="#555" className="ml-auto" />
        <Svg w={17} sw={1.7} c="#666" cls="ml-[8px]"><circle cx="8.500" cy="8.500" r="6.200" /><circle cx="8.500" cy="8.500" r="2.800" /><circle cx="8.500" cy="8.500" r="7.300" strokeDasharray="3 2.730" /></Svg>
        <span className="ml-[7px] h-[2px] w-[14px] bg-[#777]" />
      </div>
      <div className="flex h-[31px] shrink-0">
        <div className="flex w-[44px] items-center justify-center font-bold text-[#4a72b0]">All</div>
        <div className={tab + " w-[76px]"}>Copper</div><div className={tab + " w-[108px]"}>Non-Copper</div><div className={tab + " w-[69px]"}>Object</div>
      </div>
      <div className="mt-[4px] flex h-[98px] flex-col overflow-hidden">
        <div className="flex h-[30px] shrink-0 items-center"><span className="h-full w-[40px] bg-[#f00]" /><div className="flex h-full w-[263px] items-center gap-[10px] bg-[#dcdcdc] pb-[2px] pl-[10px]"><Eye />TopLayer</div></div>
        <div className="flex h-[30px] shrink-0 items-center"><span className="flex h-full w-[40px] items-center justify-center bg-[#00f]"><Svg w={22} sw={0}><path d="M2 20 L3.500 13 L13 3.500 L18.500 9 L9 18.500Z" fill="#f2a51a" /><path d="M5.500 15 L15 5.500 L17 7.500 L7 17Z" fill="#ffcf3f" /><path d="M2 20 L3.500 13 L9 18.500Z" fill="#f4e3c8" /><path d="M13 3.500 L16 1 Q21 2 21 6 L18.500 9Z" fill="#d9798a" /></Svg></span><div className="flex h-full w-[263px] items-center gap-[10px] pb-[2px] pl-[10px]"><Eye />BottomLayer</div></div>
        <div className="flex h-[30px] shrink-0 items-center"><span className="h-full w-[40px] bg-[#fc0]" /><div className="flex h-full w-[263px] items-center gap-[10px] bg-[#dcdcdc] pb-[2px] pl-[10px]"><Eye />TopSilkLayer</div></div>
        <div className="flex h-[30px] shrink-0"><span className="h-full w-[40px] bg-[#6c3]" /><div className="h-full w-[263px] bg-[#dcdcdc]" /></div>
      </div>
      <Svg w={18} sw={1.8} c="#777" cls="absolute bottom-0 right-px"><path d="M1 17 L17 1 M7 17 L17 7 M13 17 L17 13" /></Svg>
    </div>
  );
}

function Field({ l, v, sel, dark }: { l: string; v: string; sel?: boolean; dark?: boolean }) {
  return (
    <div className="flex h-[37.500px] shrink-0 pl-[12px]">
      <span className="w-[115px] whitespace-nowrap pt-[4px]">{l}</span>
      <div className={"mt-[4px] flex h-[30.500px] w-[85px] items-center overflow-hidden rounded-[3px] border " + (dark ? "border-black bg-black pl-[5px] text-white" : "border-[#ddd] bg-white text-black " + (sel ? "pl-[11px] pr-[4px] text-[16px]" : "pl-[6px]"))}>
        <span className={"overflow-hidden whitespace-nowrap pb-px " + (sel ? "w-[44px]" : "")}>{v}</span>
        {sel && <Svg w={12} h={8} sw={2} c="#111" cls="ml-auto"><path d="M1 1 L6 6.500 L11 1" /></Svg>}
      </div>
    </div>
  );
}
const Sect = ({ t }: { t: string }) => (
  <div className="flex h-[37.500px] shrink-0 items-center gap-[5px] bg-[#ececec] pl-[10px] text-[17.250px]"><TriO c="#bbb" s={10} />{t}</div>
);
function Props() {
  return (
    <div className="flex h-full flex-1">
      <div className="flex w-[227px] shrink-0 flex-col overflow-hidden bg-white text-[15px] text-[#444]">
        <div className="flex h-[38px] shrink-0 items-center bg-[#dcdcdc] pb-px pl-[11px]"><span className="w-[139px]">Selected Objects</span>0</div>
        <div className="flex h-[37.500px] shrink-0 items-center justify-center bg-[#ececec] pr-[32px] text-[17.250px]">Canvas Properties</div>
        <Field l="Units" v="mm" sel /><Field l="Background" v="#000000" dark />
        <Sect t="Grid" />
        <Field l="Visible Grid" v="Yes" sel /><Field l="Grid Color" v="#FFFFFF" /><Field l="Grid Style" v="line" sel /><Field l="Snap" v="Yes" sel />
        <Field l="Grid Size" v="5.000mm" /><Field l="Snap Size" v="1.000mm" /><Field l="Alt Snap" v="0.127mm" />
        <Sect t="Other" />
        <Field l="Routing Width" v="0.750mm" /><Field l="Routing Angle" v="Line 45" sel /><Field l="Routing Conflict" v="Block" sel /><Field l="Remove Loop" v="Yes" sel /><Field l="Copper Zone" v="Visible" sel />
      </div>
      <div className="flex w-[19px] flex-col items-center bg-[#f1f1f1]">
        <Svg w={9} h={5} sw={0} cls="mt-[9px]"><path d="M4.500 0 L9 5 H0Z" fill="#888" /></Svg>
        <div className="mt-[7px] h-[525px] w-[18px] bg-[#c1c1c1]" />
        <Svg w={9} h={5} sw={0} cls="mb-[7px] mt-auto"><path d="M0 0 H9 L4.500 5Z" fill="#444" /></Svg>
      </div>
    </div>
  );
}

function Bard() {
  return (
    <svg width="92" height="50" viewBox="0 0 92 50" className="shrink-0">
      <path d="M20 4 Q30 -1 40 4 Q45 8 45 15 Q50 18 48 23 Q51 28 47 32 Q44 36 38 34 L22 35 Q15 38 11 33 Q6 29 10 24 Q6 18 12 14 Q13 8 20 4Z" fill="#6b3f2a" />
      <path d="M18 12 Q22 5 30 5 Q37 5 40 12 L40 24 Q38 36 30 41 Q21 36 19 26Z" fill="#cb9270" />
      <path d="M1 50 Q3 42 19 36 L30 44 L42 34 Q52 38 58 50Z" fill="#17509e" />
      <path d="M20 34 L30 42 L40 33 L43 38 L36 50 H26 L19 40Z" fill="#f3e6c4" />
      <path d="M22 17 H28 M32 17 H38 M30 20 V26 M26 28.500 Q30 26 34 28.500 M30 32 V34" stroke="#543020" strokeWidth="1.400" fill="none" />
      <g transform="translate(56 14)"><path d="M5 6 L11 7 L8 36 H1Z" fill="#4b9b72" /><path d="M12 2 L18 3 L16 36 H9Z" fill="#d9822b" /><rect x="18" y="4" width="6" height="32" fill="#b8442c" /><rect x="25" y="1" width="5" height="35" fill="#e0a23c" /><rect x="30" y="7" width="4" height="29" fill="#2b7f8c" /><path d="M3 14 H10 M11 10 H17 M18 9 H24 M18 28 H24 M25 8 H30 M25 26 H30" stroke="#f4dfa0" strokeWidth="1.500" /></g>
    </svg>
  );
}
function App_({ children, on, active }: P & { on?: boolean; active?: boolean }) {
  return (
    <div className={"relative flex h-full w-[62.500px] shrink-0 items-center justify-center " + (active ? "bg-[#5a6a7a]" : "")}>
      {children}
      {on && <span className="absolute bottom-0 h-[3px] w-[50px] bg-[#76b9ed]" />}
    </div>
  );
}
function Taskbar() {
  return (
    <div className="flex h-[50px] shrink-0 items-center overflow-hidden bg-linear-to-r from-[#21363d] via-[#1c3045] to-[#1a2740] font-['Open_Sans',sans-serif] text-white">
      <div className="flex h-full w-[61px] shrink-0 items-center justify-center"><FaWindows size={21} /></div>
      <div className="flex h-full w-[359px] shrink-0 items-center border border-[#bbb] bg-[#f2f2f2] pl-[13px] text-[#333]">
        <Svg w={21} sw={1.700} c="#222"><circle cx="13" cy="8" r="6.800" /><path d="M8 13 L1 20" /></Svg>
        <span className="ml-[14px] whitespace-nowrap text-[18px] tracking-[-0.040px]">Type here to search</span>
        <span className="ml-auto"><Bard /></span>
      </div>
      <App_><Svg w={22} sw={1.500} c="#e8ecef" cls="-ml-[3px]"><path d="M1 5 V1 H15 V5 M1 17 V21 H15 V17 M1 7.500 H15 V14.500 H1Z M19.500 0 V5 M19.500 13 V22" /><path d="M18 7 H21 V10 H18Z" /></Svg></App_>
      <App_ on><svg width="28" height="24" viewBox="0 0 28 24"><path d="M1 2 H11 L13 5 H27 V22 H1Z" fill="#e9a72b" /><path d="M1 8 H27 V22 H1Z" fill="#ffd65c" /><path d="M6 14 H22 V22 H18 V18 H10 V22 H6Z" fill="#3b8fdd" /></svg></App_>
      <App_><svg width="30" height="30" viewBox="0 0 30 30"><circle cx="15" cy="15" r="14" fill="#1b78c8" /><path d="M1 14 Q4 1 16 1 Q29 2 29 14 Q28 20 20 19 Q16 18 18 15 Q16 8 8 9 Q3 10 1 14Z" fill="#44cdb0" /><path d="M1 13 Q6 7 13 10 Q8 16 12 22 Q18 28 26 23 Q20 31 11 28 Q1 24 1 13Z" fill="#1560ad" /><path d="M14 13 Q18 11 19 16 Q17 19 20 20 Q16 21 14 18Z" fill="#1c3045" /></svg></App_>
      <App_><svg width="29" height="29" viewBox="0 0 29 29"><path d="M9 7 V3 H20 V7" fill="none" stroke="#3aa0e8" strokeWidth="2" /><path d="M1 7 H28 V25 Q28 28 25 28 H4 Q1 28 1 25Z" fill="#f1f1f1" /><rect x="8" y="11" width="6" height="6" fill="#f04e23" /><rect x="15" y="11" width="6" height="6" fill="#7fb900" /><rect x="8" y="18" width="6" height="6" fill="#00a3ee" /><rect x="15" y="18" width="6" height="6" fill="#feb800" /></svg></App_>
      <App_><svg width="30" height="28" viewBox="0 0 30 28"><path d="M1 11 L15 1 L29 11 V27 H1Z" fill="#1a68b5" /><path d="M4 9 H26 V20 H4Z" fill="#e8f4fc" /><path d="M1 11 L15 20 L29 11 V27 H1Z" fill="#2f9be8" /><path d="M1 27 L15 18 L29 27Z" fill="#56bdf5" /></svg></App_>
      <App_><svg width="25" height="30" viewBox="0 0 25 30"><rect width="25" height="30" rx="2" fill="#6f8496" /><rect x="3" y="3" width="19" height="6" fill="#d5ecf8" />{[0, 1, 2, 3].map((r) => [0, 1, 2].map((q) => <rect key={r + "-" + q} x={3 + q * 7} y={11.500 + r * 4.500} width="5" height="3.500" fill={q === 2 ? "#2f9be8" : "#e3e8ec"} />))}</svg></App_>
      <App_ on><XBox s={29} /></App_>
      <App_ on><VscVscode size={30} color="#2b9fe6" /></App_>
      <App_ on active>
        <svg width="32" height="32" viewBox="0 0 32 32"><circle cx="15" cy="15" r="14" fill="#fbc116" /><path d="M15 15 L3 8 A14 14 0 0 1 27.500 8.500 H15Z" fill="#e33b2e" /><path d="M15 15 L3 8 A14 14 0 0 0 14 29 L20 18Z" fill="#2da94f" /><circle cx="15" cy="15" r="6.500" fill="#fff" /><circle cx="15" cy="15" r="5" fill="#4286f5" /><circle cx="25" cy="25" r="6.500" fill="#9cc7ea" /><path d="M19 27 L25 24 L31 27 A6.500 6.500 0 0 1 19 27Z" fill="#46626a" /></svg>
      </App_>
      <div className="ml-auto flex h-full items-center">
        <svg width="26" height="26" viewBox="0 0 26 26"><defs><radialGradient id="sun"><stop offset="0" stopColor="#ffb02e" /><stop offset="1" stopColor="#f58a1f" /></radialGradient></defs><circle cx="13" cy="13" r="12.500" fill="url(#sun)" /></svg>
        <span className="ml-[12px] w-[70px] text-[16.500px] tracking-[-0.300px]">29°C</span>
        <Svg w={14} h={9} sw={1.500} c="#fff" cls="ml-[4px]"><path d="M1 8 L7 1.500 L13 8" /></Svg>
        <Svg w={22} h={16} sw={1.400} c="#fff" cls="ml-[22px]"><path d="M7 4.500 H19 V12.500 H4 V9 M19 7 H21 V10 H19" /><path d="M8 6 H17.500 V11.500 H8Z" fill="#fff" /><path d="M1 3 H6 V6 L3.500 8 L1 6Z M2 0 V3 M5 0 V3 M3.500 8 V12" /></Svg>
        <Svg w={18} h={18} sw={1.500} c="#b8c0ca" cls="ml-[21px]"><path d="M1 17 A15 15 0 0 1 16 2 M5 17 A11 11 0 0 1 16 6.500 M9 17 A7.500 7.500 0 0 1 16 10.500" /><circle cx="15.500" cy="16" r="1.500" fill="#fff" stroke="none" /></Svg>
        <span className="ml-[17px] w-[44px] text-[14.500px] tracking-[-0.500px]">ENG</span>
        <div className="w-[78px] text-center text-[14.500px] leading-[23px] tracking-[-0.150px]"><div>11:07</div><div className="whitespace-nowrap">23-04-2023</div></div>
        <div className="relative mb-[1px] ml-[23px] mr-[26px]">
          <Svg w={21} h={20} sw={1.200} c="#1a2740"><path d="M0 0 H21 V15 H15 L9 20 V15 H0Z" fill="#fff" stroke="none" /><path d="M4 4.500 H17 M4 8 H17 M4 11.500 H12" /></Svg>
          <span className="absolute -bottom-[11px] -right-[9px] flex size-[20px] items-center justify-center rounded-full border border-[#888] bg-[#2b3240] text-[13px]">1</span>
        </div>
        <div className="mr-[5px] h-full w-px bg-[#6a7688]" />
      </div>
    </div>
  );
}

export default function App() {
  return (
    <div className="relative flex h-[900px] w-[1600px] flex-col overflow-hidden bg-white font-['Liberation_Sans',Arial,sans-serif]">
      <Chrome />
      <Header />
      <div className="flex h-[675px] min-h-0 flex-1">
        <Rail />
        <Tree />
        <Splitter />
        <div className="flex w-[1108px] shrink-0 flex-col">
          <EditorTabs />
          <RulerH />
          <div className="flex"><RulerV /><Board /></div>
        </div>
        <Splitter right />
        <Props />
      </div>
      <Taskbar />
      <PcbTools />
      <Layers />
    </div>
  );
}
